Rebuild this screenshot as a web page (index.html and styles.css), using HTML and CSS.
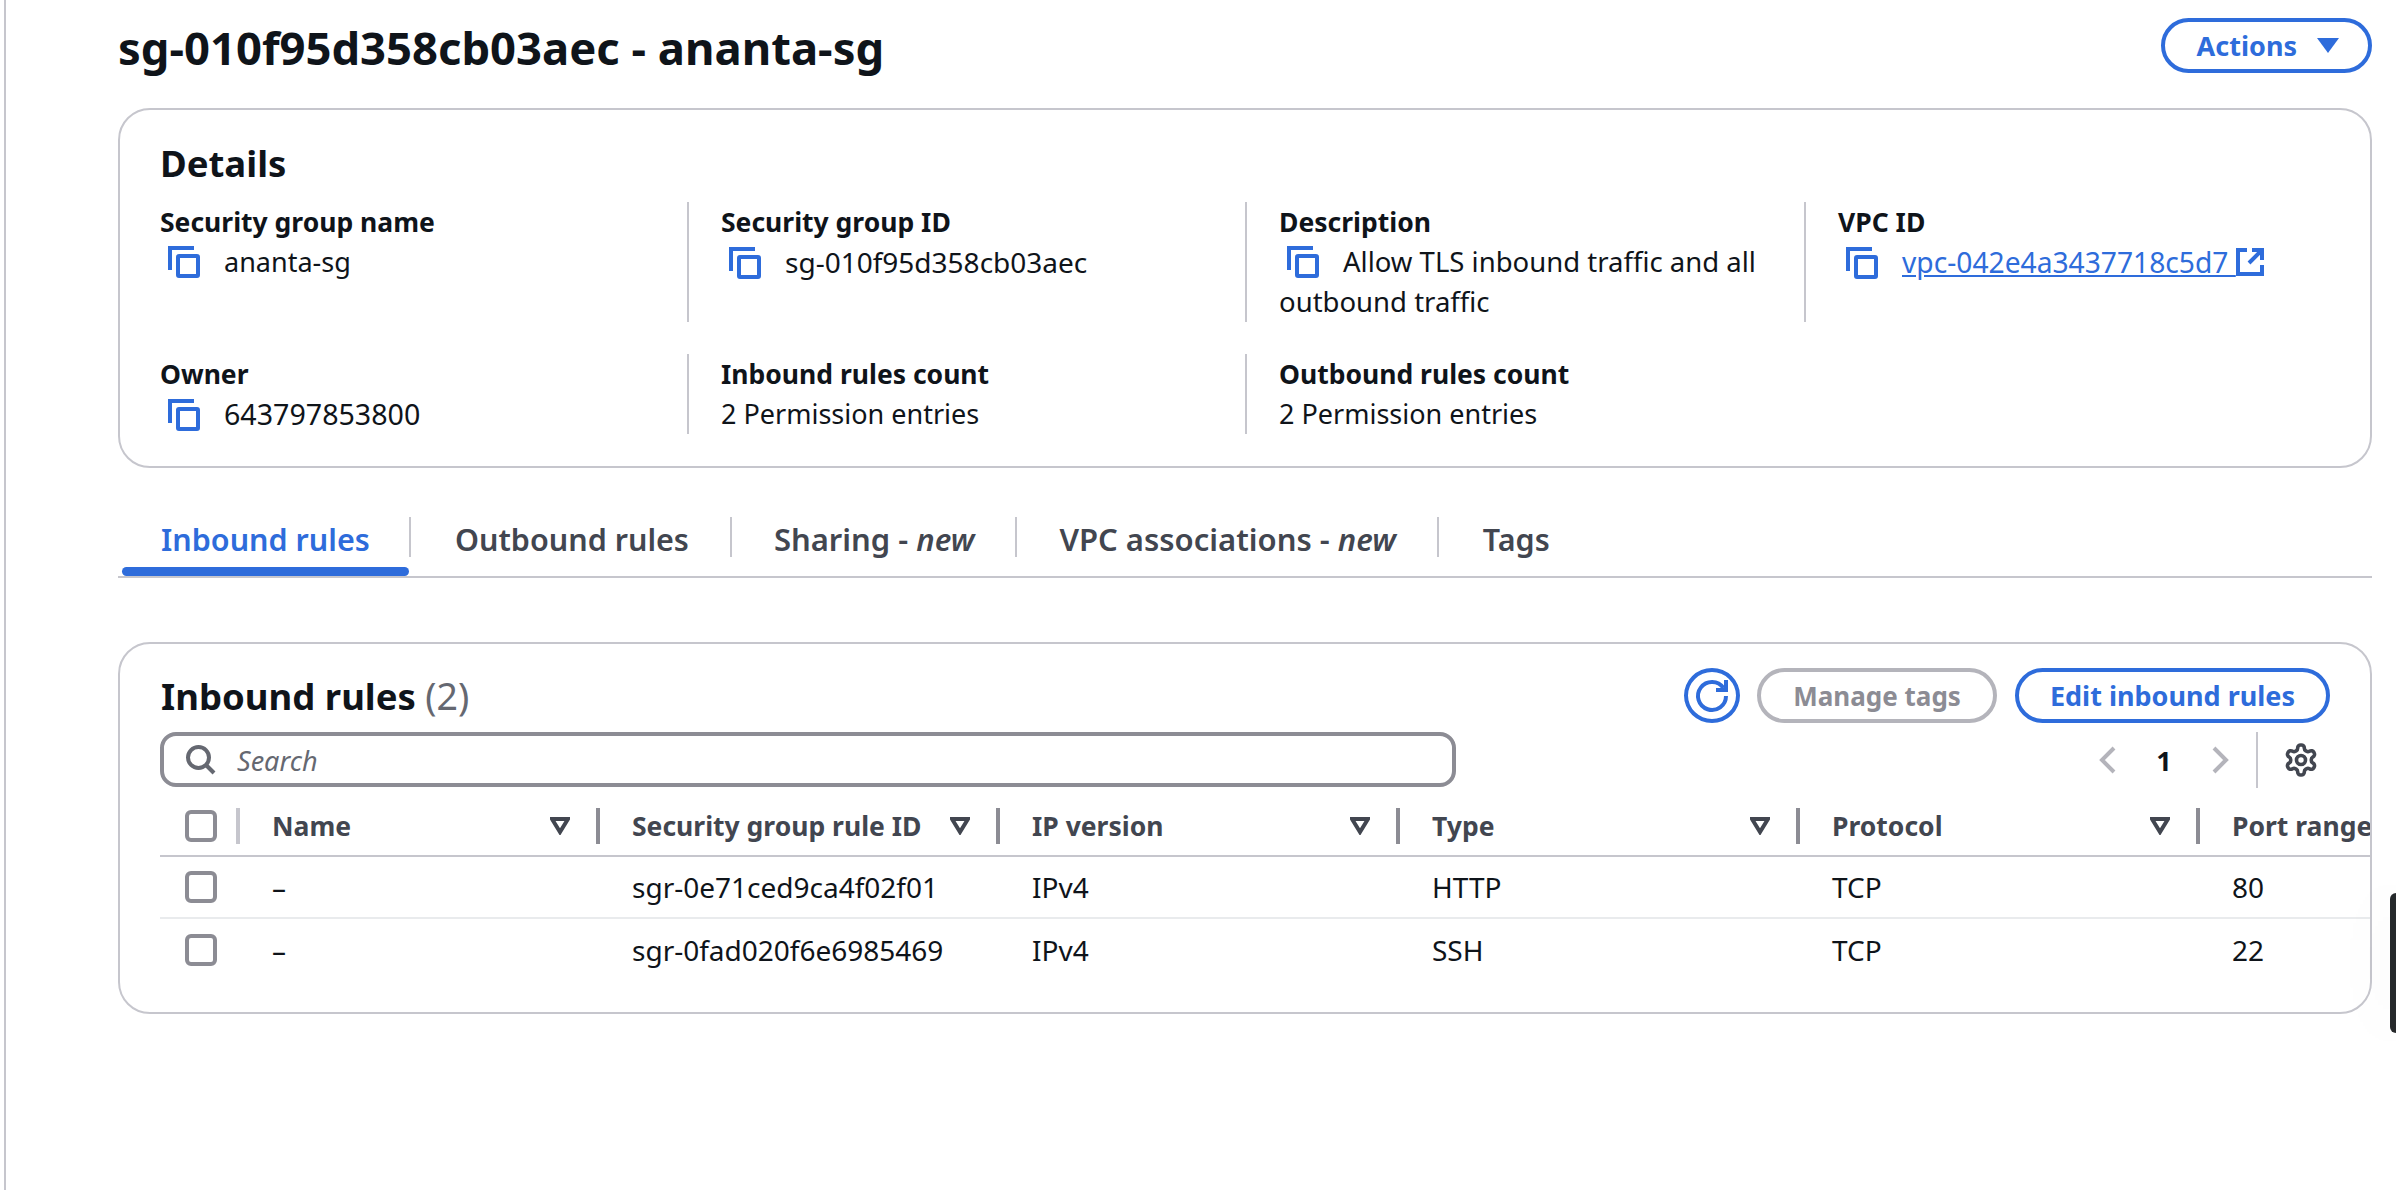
FILE: index.html
```html
<!DOCTYPE html>
<html>
<head>
    <title>sg-010f95d358cb03aec - ananta-sg</title>
    <meta charset="utf-8">
    <link rel="stylesheet" href="styles.css">
</head>
<body>
    <div class="page">
        <div class="page-header">
            <h1>sg-010f95d358cb03aec - ananta-sg</h1>
            <button class="btn btn-actions">Actions
                <svg class="caret" viewBox="0 0 22 15"><polygon points="0,0 22,0 11,15"/></svg>
            </button>
        </div>

        <!-- Details -->
        <div class="card details">
            <h2>Details</h2>
            <div class="details-grid">
                <div class="field">
                    <div class="label">Security group name</div>
                    <div class="value">
                        <svg class="copy" viewBox="0 0 32 32"><path d="M2 24V2H26"/><rect x="10" y="10" width="20" height="20" rx="1"/></svg>ananta-sg
                    </div>
                </div>
                <div class="field">
                    <div class="label">Security group ID</div>
                    <div class="value value-id">
                        <svg class="copy" viewBox="0 0 32 32"><path d="M2 24V2H26"/><rect x="10" y="10" width="20" height="20" rx="1"/></svg>sg-010f95d358cb03aec
                    </div>
                </div>
                <div class="field">
                    <div class="label">Description</div>
                    <div class="value value-desc">
                        <svg class="copy" viewBox="0 0 32 32"><path d="M2 24V2H26"/><rect x="10" y="10" width="20" height="20" rx="1"/></svg>Allow TLS inbound traffic and all outbound traffic
                    </div>
                </div>
                <div class="field">
                    <div class="label">VPC ID</div>
                    <div class="value value-id">
                        <svg class="copy" viewBox="0 0 32 32"><path d="M2 24V2H26"/><rect x="10" y="10" width="20" height="20" rx="1"/></svg><a href="#" class="link">vpc-042e4a3437718c5d7 </a>
                        <svg class="external" viewBox="0 0 28 28"><path d="M11 2H2V26H26V17"/><path d="M13 15L25 3M16 2H26V12"/></svg>
                    </div>
                </div>
                <div class="field">
                    <div class="label">Owner</div>
                    <div class="value value-owner">
                        <svg class="copy" viewBox="0 0 32 32"><path d="M2 24V2H26"/><rect x="10" y="10" width="20" height="20" rx="1"/></svg>643797853800
                    </div>
                </div>
                <div class="field">
                    <div class="label">Inbound rules count</div>
                    <div class="value">2 Permission entries</div>
                </div>
                <div class="field">
                    <div class="label">Outbound rules count</div>
                    <div class="value">2 Permission entries</div>
                </div>
            </div>
        </div>

        <!-- Tabs -->
        <div class="tabs">
            <div class="tab active">Inbound rules</div>
            <div class="tab">Outbound rules</div>
            <div class="tab tab-new">Sharing - <em>new</em></div>
            <div class="tab tab-new">VPC associations - <em>new</em></div>
            <div class="tab">Tags</div>
        </div>

        <!-- Inbound rules table -->
        <div class="card rules">
            <div class="rules-tools">
                <h2>Inbound rules <span class="count">(2)</span></h2>
                <div class="rules-buttons">
                    <button class="btn-refresh">
                        <svg viewBox="0 0 32 32"><path d="M27.5 8A14 14 0 1 0 30 16"/><path d="M30 0V10H20"/></svg>
                    </button>
                    <button class="btn btn-disabled">Manage tags</button>
                    <button class="btn btn-edit">Edit inbound rules</button>
                </div>
                <div class="search">
                    <svg viewBox="0 0 30 30"><circle cx="12.5" cy="12.5" r="10.5"/><path d="M20 20L28 28"/></svg>
                    <span>Search</span>
                </div>
                <div class="pager">
                    <svg class="chevron" viewBox="0 0 18 30"><path d="M15 3L3 15L15 27"/></svg>
                    <span class="page-num">1</span>
                    <svg class="chevron" viewBox="0 0 18 30"><path d="M3 3L15 15L3 27"/></svg>
                    <div class="pager-settings">
                        <svg class="gear" viewBox="0 0 24 24"><path d="M12.22 2h-.44a2 2 0 0 0-2 2v.18a2 2 0 0 1-1 1.73l-.43.25a2 2 0 0 1-2 0l-.15-.08a2 2 0 0 0-2.73.73l-.22.38a2 2 0 0 0 .73 2.73l.15.1a2 2 0 0 1 1 1.72v.51a2 2 0 0 1-1 1.74l-.15.09a2 2 0 0 0-.73 2.73l.22.38a2 2 0 0 0 2.73.73l.15-.08a2 2 0 0 1 2 0l.43.25a2 2 0 0 1 1 1.73V20a2 2 0 0 0 2 2h.44a2 2 0 0 0 2-2v-.18a2 2 0 0 1 1-1.73l.43-.25a2 2 0 0 1 2 0l.15.08a2 2 0 0 0 2.73-.73l.22-.39a2 2 0 0 0-.73-2.73l-.15-.08a2 2 0 0 1-1-1.74v-.5a2 2 0 0 1 1-1.74l.15-.09a2 2 0 0 0 .73-2.73l-.22-.38a2 2 0 0 0-2.73-.73l-.15.08a2 2 0 0 1-2 0l-.43-.25a2 2 0 0 1-1-1.73V4a2 2 0 0 0-2-2z"/><circle cx="12" cy="12" r="3"/></svg>
                    </div>
                </div>
            </div>

            <table class="rules-table">
                <colgroup>
                    <col class="col-check"><col class="col-name"><col class="col-wide"><col class="col-wide"><col class="col-wide"><col class="col-wide"><col class="col-wide">
                </colgroup>
                <thead>
                    <tr>
                        <th><div class="th-inner th-check"><span class="checkbox"></span></div></th>
                        <th><div class="th-inner">Name<svg class="sort" viewBox="0 0 20 18"><polygon points="2,2 18,2 10,15"/></svg></div></th>
                        <th><div class="th-inner">Security group rule ID<svg class="sort" viewBox="0 0 20 18"><polygon points="2,2 18,2 10,15"/></svg></div></th>
                        <th><div class="th-inner">IP version<svg class="sort" viewBox="0 0 20 18"><polygon points="2,2 18,2 10,15"/></svg></div></th>
                        <th><div class="th-inner">Type<svg class="sort" viewBox="0 0 20 18"><polygon points="2,2 18,2 10,15"/></svg></div></th>
                        <th><div class="th-inner">Protocol<svg class="sort" viewBox="0 0 20 18"><polygon points="2,2 18,2 10,15"/></svg></div></th>
                        <th><div class="th-inner">Port range<svg class="sort" viewBox="0 0 20 18"><polygon points="2,2 18,2 10,15"/></svg></div></th>
                    </tr>
                </thead>
                <tbody>
                    <tr>
                        <td class="td-check"><span class="checkbox"></span></td>
                        <td>–</td>
                        <td>sgr-0e71ced9ca4f02f01</td>
                        <td>IPv4</td>
                        <td>HTTP</td>
                        <td>TCP</td>
                        <td>80</td>
                    </tr>
                    <tr>
                        <td class="td-check"><span class="checkbox"></span></td>
                        <td>–</td>
                        <td>sgr-0fad020f6e6985469</td>
                        <td>IPv4</td>
                        <td>SSH</td>
                        <td>TCP</td>
                        <td>22</td>
                    </tr>
                </tbody>
            </table>
        </div>
    </div>

    <div class="edge-widget"></div>
</body>
</html>
```

FILE: styles.css
```css
* {
    box-sizing: border-box;
}

body {
    margin: 0;
    background-color: #ffffff;
    color: #0f141a;
    font-family: "Noto Sans", "Open Sans", sans-serif;
    font-size: 28px;
    overflow: hidden;
}

.page {
    margin-left: 4px;
    height: 1190px;
    padding: 18px 24px 0 112px;
    border-left: 2px solid #c6c6cd;
}

.page-header {
    display: flex;
    justify-content: space-between;
    align-items: center;
    height: 55px;
}

h1 {
    margin: 3px 0 0 0;
    font-size: 45.4px;
    font-weight: 700;
    line-height: 56px;
}

h2 {
    margin: 0;
    font-size: 36.5px;
    font-weight: 700;
    line-height: 48px;
}

.btn {
    height: 55px;
    padding: 0 32px;
    background-color: #ffffff;
    border: 4px solid #2e6cdb;
    border-radius: 28px;
    color: #2e6cdb;
    font-family: inherit;
    font-size: 27px;
    font-weight: 700;
    white-space: nowrap;
}

.btn-actions {
    display: flex;
    align-items: center;
    gap: 20px;
    padding-right: 29px;
}

.caret {
    width: 22px;
    height: 15px;
    fill: #2e6cdb;
}

.btn-disabled {
    border-color: #b4b4bb;
    color: #8c8c94;
    font-size: 26px;
}

.card {
    border: 2px solid #c6c6cd;
    border-radius: 32px;
    background-color: #ffffff;
    overflow: hidden;
}

/* details card */
.details {
    margin-top: 35px;
    height: 360px;
    padding: 29px 0 0 40px;
}

.details-grid {
    display: grid;
    grid-template-columns: 527px 558px 559px 1fr;
    grid-template-rows: 120px 80px;
    row-gap: 32px;
    margin-top: 15px;
}

.field {
    padding-left: 32px;
    border-left: 2px solid #c6c6cd;
    line-height: 40px;
}

.field:nth-child(4n+1) {
    padding-left: 0;
    border-left: none;
}

.label {
    font-weight: 700;
    font-size: 26.5px;
}

.value {
    font-size: 27px;
}

.value-desc {
    font-size: 27.5px;
}

.value-id {
    font-size: 28px;
}

.value-owner {
    font-size: 28.6px;
}

.copy {
    display: inline-block;
    width: 32px;
    height: 32px;
    margin: 0 24px 0 8px;
    vertical-align: -6px;
    fill: none;
    stroke: #2e6cdb;
    stroke-width: 4;
}

.link {
    color: #2e6cdb;
    font-size: 28.2px;
}

.external {
    display: inline-block;
    width: 28px;
    height: 28px;
    vertical-align: -3px;
    fill: none;
    stroke: #2e6cdb;
    stroke-width: 4;
}

/* tabs */
.tabs {
    display: flex;
    position: relative;
    margin-top: 49px;
    height: 61px;
    border-bottom: 2px solid #c6c6cd;
}

.tab {
    height: 40px;
    padding: 0 41px 0 44px;
    border-right: 2px solid #c6c6cd;
    color: #424650;
    font-size: 30.5px;
    font-weight: 600;
    line-height: 45px;
    white-space: nowrap;
}

.tab:last-child {
    border-right: none;
}

.tab-new {
    padding-left: 42px;
    font-size: 31px;
}

.tab.active {
    position: relative;
    padding-left: 43px;
    width: 293px;
    color: #2e6cdb;
}

.tab.active::after {
    content: "";
    position: absolute;
    left: 4px;
    right: 0;
    top: 50px;
    height: 9px;
    background-color: #2e6cdb;
    border-radius: 5px;
}

/* rules card */
.rules {
    margin-top: 64px;
    height: 372px;
}

.rules-tools {
    display: grid;
    grid-template-columns: 1296px 1fr;
    grid-template-rows: 55px 56px;
    row-gap: 9px;
    padding: 24px 40px 0 40px;
}

.rules-tools h2 {
    padding-left: 1px;
    line-height: 56px;
}

.count {
    color: #656871;
    font-weight: 400;
    font-size: 37.5px;
}

.rules-buttons {
    display: flex;
    justify-content: flex-end;
    gap: 17px;
}

.rules-buttons .btn-edit {
    padding: 0 31px;
    margin-left: 1px;
}

.btn-refresh {
    width: 56px;
    height: 55px;
    padding: 0;
    display: flex;
    align-items: center;
    justify-content: center;
    background-color: #ffffff;
    border: 4px solid #2e6cdb;
    border-radius: 50%;
}

.btn-refresh svg {
    width: 32px;
    height: 32px;
    overflow: visible;
    fill: none;
    stroke: #2e6cdb;
    stroke-width: 4;
}

.search {
    display: flex;
    align-items: center;
    gap: 21px;
    padding-left: 22px;
    height: 55px;
    border: 4px solid #8c8c94;
    border-radius: 16px;
    color: #656871;
    font-style: italic;
    font-size: 27px;
}

.search span {
    padding-top: 2px;
}

.search svg {
    width: 30px;
    height: 30px;
    fill: none;
    stroke: #656871;
    stroke-width: 4;
}

.pager {
    display: flex;
    justify-content: flex-end;
    align-items: center;
}

.chevron {
    width: 18px;
    height: 30px;
    fill: none;
    stroke: #b4b4bb;
    stroke-width: 4;
}

.page-num {
    width: 94px;
    text-align: center;
    font-weight: 700;
    font-size: 27px;
}

.pager-settings {
    display: flex;
    align-items: center;
    height: 56px;
    margin-left: 27px;
    padding: 0 11px 0 25px;
    border-left: 2px solid #c6c6cd;
}

.gear {
    width: 36px;
    height: 36px;
    fill: none;
    stroke: #424650;
    stroke-width: 2.4;
}

.rules-table {
    margin: 20px 0 0 40px;
    width: 2040px;
    border-collapse: collapse;
    table-layout: fixed;
}

.col-check {
    width: 80px;
}

.col-name {
    width: 360px;
}

.col-wide {
    width: 400px;
}

.rules-table th {
    padding: 0 0 11px 0;
    border-bottom: 2px solid #c6c6cd;
    color: #424650;
    font-size: 26.5px;
    font-weight: 700;
    text-align: left;
}

.th-inner {
    display: flex;
    justify-content: space-between;
    align-items: center;
    height: 36px;
    padding: 0 26px 0 32px;
    border-right: 4px solid #8c8c94;
    white-space: nowrap;
}

.th-check {
    padding: 0 0 0 25px;
    border-right-color: #c6c6cd;
}

.sort {
    width: 20px;
    height: 18px;
    fill: none;
    stroke: #424650;
    stroke-width: 4;
}

.checkbox {
    display: block;
    width: 32px;
    height: 32px;
    border: 4px solid #8c8c94;
    border-radius: 6px;
}

.rules-table td {
    height: 62px;
    padding: 0 0 0 32px;
    border-bottom: 2px solid #e9ebed;
    white-space: nowrap;
}

.rules-table td.td-check {
    padding-left: 25px;
}

.rules-table tr:last-child td {
    border-bottom: none;
}

/* dark thing hanging in from the right edge */
.edge-widget {
    position: fixed;
    right: 0;
    top: 893px;
    width: 6px;
    height: 140px;
    background-color: #26292b;
    border-radius: 14px 0 0 14px;
    box-shadow: 0 0 60px rgba(0, 0, 0, 0.12);
}
```
